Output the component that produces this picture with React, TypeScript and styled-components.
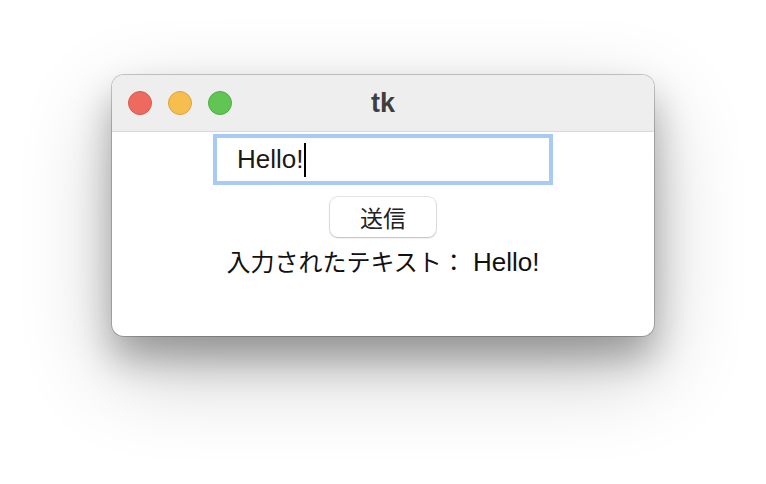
import React from "react";
import styled, { createGlobalStyle } from "styled-components";

const Global = createGlobalStyle`
  html, body { margin: 0; padding: 0; background: #ffffff; }
  body { font-family: "Liberation Sans", Arial, "Noto Sans CJK JP", sans-serif; }
`;

const Page = styled.div`
  width: 766px;
  height: 484px;
  display: flex;
  justify-content: center;
  align-items: flex-start;
  padding-top: 75px;
  box-sizing: border-box;
  background: #ffffff;
  overflow: hidden;
`;

const Window = styled.div`
  width: 542px;
  height: 261px;
  border-radius: 12px;
  overflow: hidden;
  background: #ffffff;
  display: flex;
  flex-direction: column;
  box-shadow: 0 0 0 1px rgba(0, 0, 0, 0.2), 0 22px 36px rgba(0, 0, 0, 0.28),
    0 34px 90px rgba(0, 0, 0, 0.24);
`;

const TitleBar = styled.div`
  height: 57px;
  flex: none;
  box-sizing: border-box;
  background: #eeeeee;
  border-bottom: 1px solid #d8d8d8;
  display: grid;
  grid-template-columns: 1fr auto 1fr;
  align-items: center;
  padding: 0 16px;
`;

const Lights = styled.div`
  display: flex;
  gap: 16px;
  align-items: center;
`;

const Light = styled.span<{ $fill: string; $edge: string }>`
  width: 24px;
  height: 24px;
  border-radius: 50%;
  box-sizing: border-box;
  background: ${(p) => p.$fill};
  border: 1px solid ${(p) => p.$edge};
`;

const Title = styled.div`
  font-family: "Liberation Sans", Arial, sans-serif;
  font-weight: 700;
  font-size: 27px;
  line-height: 1;
  color: #3e3e3e;
  padding-top: 1px;
`;

const Content = styled.div`
  flex: 1;
  display: flex;
  flex-direction: column;
  align-items: center;
  padding-top: 2px;
`;

const Entry = styled.div`
  width: 340px;
  height: 51px;
  box-sizing: border-box;
  border: 4px solid #a8cbf5;
  background: #ffffff;
  display: flex;
  align-items: center;
  padding-left: 20px;
  font-family: "Liberation Sans", Arial, sans-serif;
  font-size: 26px;
  color: #1a1a1a;
`;

const Caret = styled.span`
  display: inline-block;
  width: 2px;
  height: 34px;
  background: #000000;
  margin-left: 1px;
`;

const Button = styled.div`
  margin-top: 12px;
  width: 106px;
  height: 40px;
  box-sizing: border-box;
  border-radius: 8px;
  background: #ffffff;
  box-shadow: 0 0 0 1px rgba(0, 0, 0, 0.1), 0 1px 2px rgba(0, 0, 0, 0.18);
  display: flex;
  align-items: center;
  justify-content: center;
  font-family: "Noto Sans CJK JP", sans-serif;
  font-size: 23px;
  color: #222222;
`;

const Label = styled.div`
  margin-top: 8px;
  font-family: "Noto Sans CJK JP", sans-serif;
  font-size: 24px;
  line-height: 32px;
  color: #111111;
  white-space: pre;
`;

const Latin = styled.span`
  font-family: "Liberation Sans", Arial, sans-serif;
  font-size: 26px;
`;

export default function App() {
  return (
    <>
      <Global />
      <Page>
        <Window>
          <TitleBar>
            <Lights>
              <Light $fill="#ee6a5e" $edge="#d65a4f" />
              <Light $fill="#f6be4f" $edge="#dea43c" />
              <Light $fill="#61c554" $edge="#50ab43" />
            </Lights>
            <Title>tk</Title>
            <span />
          </TitleBar>
          <Content>
            <Entry>
              Hello!
              <Caret />
            </Entry>
            <Button>送信</Button>
            <Label>
              入力されたテキスト：<Latin> Hello!</Latin>
            </Label>
          </Content>
        </Window>
      </Page>
    </>
  );
}
